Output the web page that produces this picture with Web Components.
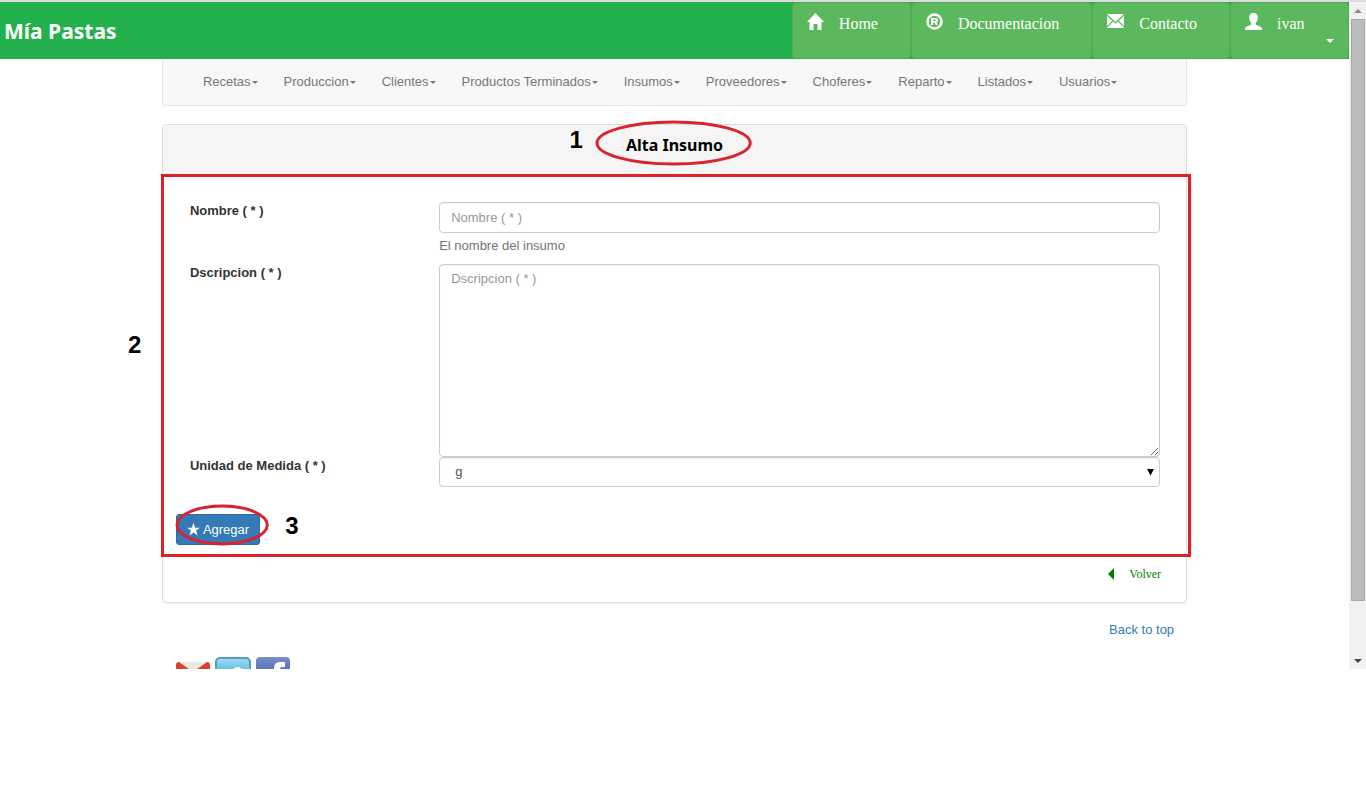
<!DOCTYPE html>
<html lang="es">
<head>
<meta charset="utf-8">
<title>Mía Pastas - Alta Insumo</title>
<style>
  body { margin: 0; background: #fff; color: #333; font: 13px/20px "Liberation Sans", Arial, sans-serif; }
</style>
</head>
<body>
<mp-window>
  <mp-header brand="Mía Pastas">
    <mp-header-link icon="home">Home</mp-header-link>
    <mp-header-link icon="registered">Documentacion</mp-header-link>
    <mp-header-link icon="mail">Contacto</mp-header-link>
    <mp-header-link icon="user" menu>ivan</mp-header-link>
  </mp-header>
  <mp-container>
    <mp-nav>
      <mp-nav-item>Recetas</mp-nav-item>
      <mp-nav-item>Produccion</mp-nav-item>
      <mp-nav-item>Clientes</mp-nav-item>
      <mp-nav-item>Productos Terminados</mp-nav-item>
      <mp-nav-item>Insumos</mp-nav-item>
      <mp-nav-item>Proveedores</mp-nav-item>
      <mp-nav-item>Choferes</mp-nav-item>
      <mp-nav-item>Reparto</mp-nav-item>
      <mp-nav-item>Listados</mp-nav-item>
      <mp-nav-item>Usuarios</mp-nav-item>
    </mp-nav>
    <mp-panel>
      <mp-ring slot="title" class="title" number="1" side="left">Alta Insumo</mp-ring>
      <mp-field kind="input" label="Nombre ( * )" help="El nombre del insumo"></mp-field>
      <mp-field kind="textarea" label="Dscripcion ( * )"></mp-field>
      <mp-field kind="select" label="Unidad de Medida ( * )" value="g"></mp-field>
      <mp-ring slot="actions" class="action" number="3" side="right"><mp-submit>Agregar</mp-submit></mp-ring>
    </mp-panel>
    <mp-footer></mp-footer>
  </mp-container>
</mp-window>

<script>
const define = (name, html, setup) => {
  const template = document.createElement('template');
  template.innerHTML = html;
  customElements.define(name, class extends HTMLElement {
    constructor() {
      super();
      this.attachShadow({ mode: 'open' }).append(template.content.cloneNode(true));
    }
    connectedCallback() { if (setup) setup(this, this.shadowRoot); }
  });
};

const icons = {
  home: '<path d="M8.500 0 17 9H14.500V17H10.500V11H6.500V17H2.500V9H0Z"/>',
  registered: '<circle cx="8.500" cy="8.500" r="7" fill="none" stroke="#fff" stroke-width="2.500"/><path fill-rule="evenodd" d="M5 5h4.500q2.500 0 2.500 2.200 0 1.500-1.300 2L12 12H9.600L8.500 9.600H7.200V12H5ZM7.200 6.600v1.500h1.900q.8 0 .8-.8 0-.7-.8-.7Z"/>',
  mail: '<path d="M0 1h17L8.500 9ZM0 2.800 5.200 7.700 0 13ZM17 2.800V13L11.800 7.700ZM0 15v-.6L6.200 8.600l2.300 2.200L10.800 8.600 17 14.400V15Z"/>',
  user: '<path d="M8.500 0C11.500 0 13 2 12.800 5c-.1 2.200-1 3.700-2 4.700v1.500c0 1 5 2 6.200 3.800V17H0v-2c1.200-1.800 6.200-2.800 6.200-3.800V9.700c-1-1-1.900-2.500-2-4.700C4 2 5.500 0 8.500 0Z"/>'
};

define('mp-window', `
  <style>
    :host { display: flex; border-top: 2px solid #dcdcdc; }
    main { flex: 1; min-width: 0; }
  </style>
  <main><slot></slot></main>
  <mp-scrollbar></mp-scrollbar>`);

define('mp-scrollbar', `
  <style>
    :host { display: flex; flex-direction: column; width: 17px; background: #f1f1f1; align-items: center; }
    .end { height: 17px; display: grid; place-items: center; }
    .track { flex: 1; width: 14px; display: flex; flex-direction: column; }
    .thumb { box-sizing: border-box; height: 92%; background: #bcbcbc; border: 1px solid #a8a8a8; }
    svg { display: block; }
  </style>
  <div class="end"><svg width="8" height="4" fill="#8a8a8a"><path d="M4 0 8 4H0Z"/></svg></div>
  <div class="track"><div class="thumb"></div></div>
  <div class="end"><svg width="8" height="4" fill="#444"><path d="M0 0H8L4 4Z"/></svg></div>`);

define('mp-header', `
  <style>
    :host { display: flex; background: #22b14c; min-height: 57px; }
    .brand { flex: 1; padding: 16px 4px 15px; font: bold 21px/26px "Noto Sans", sans-serif; color: #fff; text-decoration: none; }
    nav { display: flex; }
  </style>
  <a class="brand" href="#"></a>
  <nav><slot></slot></nav>`,
  (host, root) => { root.querySelector('.brand').textContent = host.getAttribute('brand'); });

define('mp-header-link', `
  <style>
    :host { display: flex; }
    a { box-sizing: border-box; min-width: 119px; position: relative; display: flex; gap: 15px; align-items: flex-start; padding: 9px 32px 8px 14px;
        background: #5cb85c; border: 1px solid #4cae4c; border-radius: 4px;
        color: #fff; text-decoration: none; font: 16px/24px "Liberation Serif", serif; }
    svg { display: block; fill: #fff; margin-top: 1px; }
    i { display: none; position: absolute; right: 14px; bottom: 15px; border: 4px solid transparent; border-top-color: #fff; border-bottom: 0; }
    :host([menu]) i { display: block; }
  </style>
  <a href="#"><svg width="17" height="17" viewBox="0 0 17 17"></svg><span><slot></slot></span><i></i></a>`,
  (host, root) => { root.querySelector('svg').innerHTML = icons[host.getAttribute('icon')]; });

define('mp-container', `
  <style>:host { display: block; width: 76%; margin: 0 auto; }</style>
  <slot></slot>`);

define('mp-nav', `
  <style>
    :host { display: block; }
    nav { display: flex; flex-wrap: wrap; gap: 0 26px; padding: 13px 40px; background: #f8f8f8;
          border: 1px solid #e7e7e7; border-top: 0; border-radius: 0 0 4px 4px; }
  </style>
  <nav><slot></slot></nav>`);

define('mp-nav-item', `
  <style>
    :host { display: block; }
    a { display: flex; align-items: center; gap: 1px; color: #777; text-decoration: none; white-space: nowrap; }
    i { border: 3px solid transparent; border-top-color: #777; border-bottom: 0; }
  </style>
  <a href="#"><slot></slot><i></i></a>`);

define('mp-ring', `
  <style>
    :host { display: inline-block; position: relative; }
    svg { position: absolute; inset: var(--ring-inset); width: calc(100% + var(--ring-grow-x)); height: calc(100% + var(--ring-grow-y)); overflow: visible; pointer-events: none; }
    b { position: absolute; top: var(--number-top); font: bold 24px/24px "Liberation Sans", Arial, sans-serif; color: #000; }
    :host([side=left]) b { right: calc(100% + 43px); }
    :host([side=right]) b { left: calc(100% + 25px); }
  </style>
  <slot></slot>
  <svg><ellipse cx="50%" cy="50%" rx="50%" ry="50%" fill="none" stroke="#d9232e" stroke-width="3"/></svg>
  <b></b>`,
  (host, root) => { root.querySelector('b').textContent = host.getAttribute('number'); });

define('mp-panel', `
  <style>
    :host { display: block; margin-top: 18px; border: 1px solid #ddd; border-radius: 4px; box-shadow: 0 1px 1px rgba(0,0,0,.05); }
    header { padding: 8px 0 18px; background: #f5f5f5; text-align: center; border-radius: 3px 3px 0 0; }
    h1 { margin: 0; font: bold 16px/24px "Noto Sans", sans-serif; color: #000; }
    form { position: relative; padding: 27px 13px 12px; }
    .frame { position: absolute; inset: -1px -5px 0 -2px; border: 3px solid #e01f26; pointer-events: none; }
    .step { position: absolute; left: -35px; top: 158px; font: bold 24px/24px "Liberation Sans", Arial, sans-serif; color: #000; }
    .actions { display: flex; padding-top: 27px; }
    footer { display: flex; justify-content: flex-end; padding: 7px 25px 18px; }
    footer a { display: flex; gap: 15px; align-items: center; color: green; font: 12px/20px "Liberation Serif", serif; text-decoration: none; }
    ::slotted(.title) { --ring-inset: -11px 0 0 -29px; --ring-grow-x: 56px; --ring-grow-y: 18px; --number-top: -5px; }
    ::slotted(.action) { --ring-inset: -8px 0 0 1px; --ring-grow-x: 6px; --ring-grow-y: 7px; --number-top: 0; }
  </style>
  <header><h1><slot name="title"></slot></h1></header>
  <form>
    <slot></slot>
    <div class="actions"><slot name="actions"></slot></div>
    <div class="frame"></div>
    <b class="step">2</b>
  </form>
  <footer><a href="#"><svg width="6" height="12" fill="green"><path d="M6 0V12L0 6Z"/></svg>Volver</a></footer>`);

define('mp-field', `
  <style>
    :host { display: grid; grid-template-columns: 25% 1fr; }
    label { padding: 0 14px; margin-top: -1px; font-weight: bold; color: #333; white-space: nowrap; }
    .cell { position: relative; padding: 0 13px 0 14px; }
    .control { box-sizing: border-box; display: block; width: 100%; margin: 0; padding: 4px 11px; border: 1px solid #ccc; border-radius: 4px;
      background: #fff; color: #555; font: 13px/20px "Liberation Sans", Arial, sans-serif; box-shadow: inset 0 1px 1px rgba(0,0,0,.05); }
    input.control { height: 31px; }
    textarea.control { height: 193px; }
    select.control { height: 30px; padding: 4px 15px; appearance: none; }
    .control::placeholder { color: #999; opacity: 1; }
    p { margin: 3px 0 8px; color: #737373; }
    .arrow { position: absolute; right: 19px; top: 12px; pointer-events: none; }
  </style>
  <label for="control"></label>
  <div class="cell"></div>`,
  (host, root) => {
    const label = host.getAttribute('label');
    const kind = host.getAttribute('kind');
    const cell = root.querySelector('.cell');
    root.querySelector('label').textContent = label;
    cell.replaceChildren();
    const control = document.createElement(kind);
    control.id = 'control';
    control.className = 'control';
    if (kind === 'select') control.add(new Option(host.getAttribute('value')));
    else control.placeholder = label;
    cell.append(control);
    if (kind === 'select') {
      cell.insertAdjacentHTML('beforeend', '<svg class="arrow" width="7" height="7"><path d="M0 0H7L3.500 6.500Z"/></svg>');
    }
    if (host.hasAttribute('help')) {
      const help = document.createElement('p');
      help.textContent = host.getAttribute('help');
      cell.append(help);
    }
  });

define('mp-submit', `
  <style>
    :host { display: block; }
    button { display: flex; align-items: center; gap: 3px; height: 31px; padding: 0 10px; border: 1px solid #2e6da4; border-radius: 3px;
      background: #337ab7; color: #fff; font: 13px/20px "Liberation Sans", Arial, sans-serif; }
  </style>
  <button type="button"><svg width="13" height="13" viewBox="0 0 14 14" fill="#fff"><path d="M7 0 8.800 5H14L9.800 8.200 11.400 13.500 7 10.300 2.600 13.500 4.200 8.200 0 5H5.200Z"/></svg><slot></slot></button>`);

define('mp-footer', `
  <style>
    :host { display: block; padding: 17px 13px 0; }
    .top { display: flex; justify-content: flex-end; }
    a { color: #337ab7; text-decoration: none; }
    .social { display: flex; gap: 5px; height: 12px; margin-top: 17px; padding-left: 1px; overflow: hidden; }
    svg { display: block; }
  </style>
  <div class="top"><a href="#">Back to top</a></div>
  <div class="social">
    <a href="#" aria-label="Gmail"><svg width="34" height="34"><path d="M2 5H32L34 7V30H0V7Z" fill="#ece9e4"/><path d="M0 8Q0 5 3 5L17 15 31 5Q34 5 34 8V30H29V13L17 22 5 13V30H0Z" fill="#d8432f"/></svg></a>
    <a href="#" aria-label="Twitter"><svg width="36" height="36"><defs><linearGradient id="t" x2="0" y2="1"><stop stop-color="#a5dcef"/><stop offset=".3" stop-color="#6cc5e6"/></linearGradient></defs><rect x="1" y="1" width="34" height="34" rx="4" fill="url(#t)" stroke="#5a9db8" stroke-width="2"/><path d="M18 14Q19 10 23 10 25 10 26 12L28 11 26 15Q25 26 13 26L9 24Q14 24 15 21L10 14Z" fill="#fff"/></svg></a>
    <a href="#" aria-label="Facebook"><svg width="34" height="34"><defs><linearGradient id="f" x2="0" y2="1"><stop stop-color="#7d8fc8"/><stop offset=".3" stop-color="#5f78bd"/></linearGradient></defs><rect width="34" height="34" rx="4" fill="url(#f)"/><path d="M18 34V18H15V13H18V11Q18 5 24 5H29V10H26Q24 10 24 12V13H29L28 18H24V34Z" fill="#fff"/></svg></a>
  </div>`);
</script>
</body>
</html>
